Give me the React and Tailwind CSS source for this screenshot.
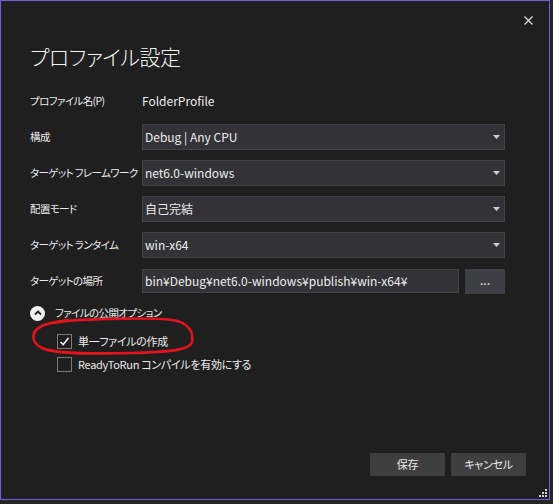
import React from "react";

const rows = [
  { label: "構成", value: "Debug | Any CPU" },
  { label: "ターゲット フレームワーク", value: "net6.0-windows" },
  { label: "配置モード", value: "自己完結" },
  { label: "ターゲット ランタイム", value: "win-x64" },
];

const jp = "text-[11px] tracking-[-0.3px]";
// the left column labels are set a bit tighter, like the dialog's UI font
const lbl = "w-[112px] whitespace-nowrap text-[10.5px] tracking-[-0.6px]";

function Arrow() {
  return (
    <svg width="7" height="4" viewBox="0 0 7 4" className="shrink-0">
      <polygon points="0,0 7,0 3.5,4" fill="#d0d0d0" />
    </svg>
  );
}

function Combo({ value }) {
  return (
    <div className="flex h-[26px] w-[363px] items-center justify-between border border-[#434346] bg-[#333337] pl-[2px] pr-[4px]">
      <span>{value}</span>
      <Arrow />
    </div>
  );
}

function Check({ checked, label }) {
  return (
    <div className="flex h-[22px] items-center pl-[27px]">
      <div className="flex h-[15px] w-[15px] items-center justify-center border border-[#7a7a7a]">
        {checked && (
          <svg width="11" height="11" viewBox="0 0 11 11">
            <path d="M1.5 6 L4.2 8.6 L9.5 2" fill="none" stroke="#f1f1f1" strokeWidth="1.6" />
          </svg>
        )}
      </div>
      <span className={"ml-[6px] " + jp}>{label}</span>
    </div>
  );
}

export default function App() {
  return (
    <div className="h-[504px] w-[553px] bg-[#252526] font-['Noto_Sans_CJK_JP','Noto_Sans',sans-serif] text-[12px] text-[#ececec] [font-feature-settings:'palt']">
      <div className="relative flex h-[500px] w-[550px] flex-col border border-[#6d62d8] bg-[#1f1f1f] pl-[29px]">
        <div className="flex h-[39px] items-center justify-end pr-[16px]">
          <svg width="9" height="9" viewBox="0 0 9 9">
            <path d="M0.5 0.5 L8.5 8.5 M8.5 0.5 L0.5 8.5" stroke="#d8d8d8" strokeWidth="1.3" />
          </svg>
        </div>

        <h1 className="h-[32px] text-[21px] leading-[32px] font-light tracking-[-0.5px] text-[#f4f4f4]">
          プロファイル設定
        </h1>

        <div className="mt-[16px] flex h-[26px] items-center">
          <span className={lbl}>プロファイル名(P)</span>
          <span>FolderProfile</span>
        </div>

        <div className="mt-[10px] flex flex-col gap-[10px]">
          {rows.map((r) => (
            <div key={r.label} className="flex h-[26px] items-center">
              <span className={lbl}>{r.label}</span>
              <Combo value={r.value} />
            </div>
          ))}
          <div className="flex h-[26px] items-center">
            <span className={lbl}>ターゲットの場所</span>
            <div className="flex h-[24px] w-[317px] items-center border border-[#434346] bg-[#333337] pl-[2px]">
              bin¥Debug¥net6.0-windows¥publish¥win-x64¥
            </div>
            <button className="ml-[6px] flex h-[25px] w-[40px] items-center justify-center bg-[#3f3f46] pb-[2px]">
              ...
            </button>
          </div>
        </div>

        <div className="mt-[11px] flex h-[16px] items-center">
          <div className="flex h-[15px] w-[15px] items-center justify-center rounded-full bg-[#f0f0f0]">
            <svg width="8" height="6" viewBox="0 0 8 6">
              <path d="M1 4.5 L4 1.5 L7 4.5" fill="none" stroke="#1f1f1f" strokeWidth="1.8" />
            </svg>
          </div>
          <span className="ml-[10px] text-[10.5px] tracking-[-0.6px]">ファイルの公開オプション</span>
        </div>

        <div className="mt-[9px] flex flex-col gap-[1px]">
          <Check checked label="単一ファイルの作成" />
          <Check label="ReadyToRun コンパイルを有効にする" />
        </div>

        <div className="mt-auto mb-[23px] flex justify-end gap-[6px] pr-[23px]">
          <button className={"h-[23px] w-[75px] bg-[#3f3f3f] " + jp}>保存</button>
          <button className={"h-[23px] w-[75px] bg-[#3f3f3f] " + jp}>キャンセル</button>
        </div>

        <svg
          className="pointer-events-none absolute inset-0"
          width="548"
          height="498"
          viewBox="1 1 548 498"
        >
          <path
            d="M53 323 C70 319 150 317 172 320 C188 322 194 332 192 342 C190 350 170 352 130 353 C90 354 55 354 42 348 C30 342 31 331 42 326 C50 322 60 321 68 320"
            fill="none"
            stroke="#e3131c"
            strokeWidth="2.6"
            strokeLinecap="round"
          />
        </svg>

        <svg className="absolute right-[2px] bottom-[2px]" width="9" height="9" viewBox="0 0 9 9">
          <g fill="#d0d0d0">
            <rect x="7" y="1" width="2" height="2" />
            <rect x="4" y="4" width="2" height="2" />
            <rect x="7" y="4" width="2" height="2" />
            <rect x="1" y="7" width="2" height="2" />
            <rect x="4" y="7" width="2" height="2" />
            <rect x="7" y="7" width="2" height="2" />
          </g>
        </svg>
      </div>
    </div>
  );
}
